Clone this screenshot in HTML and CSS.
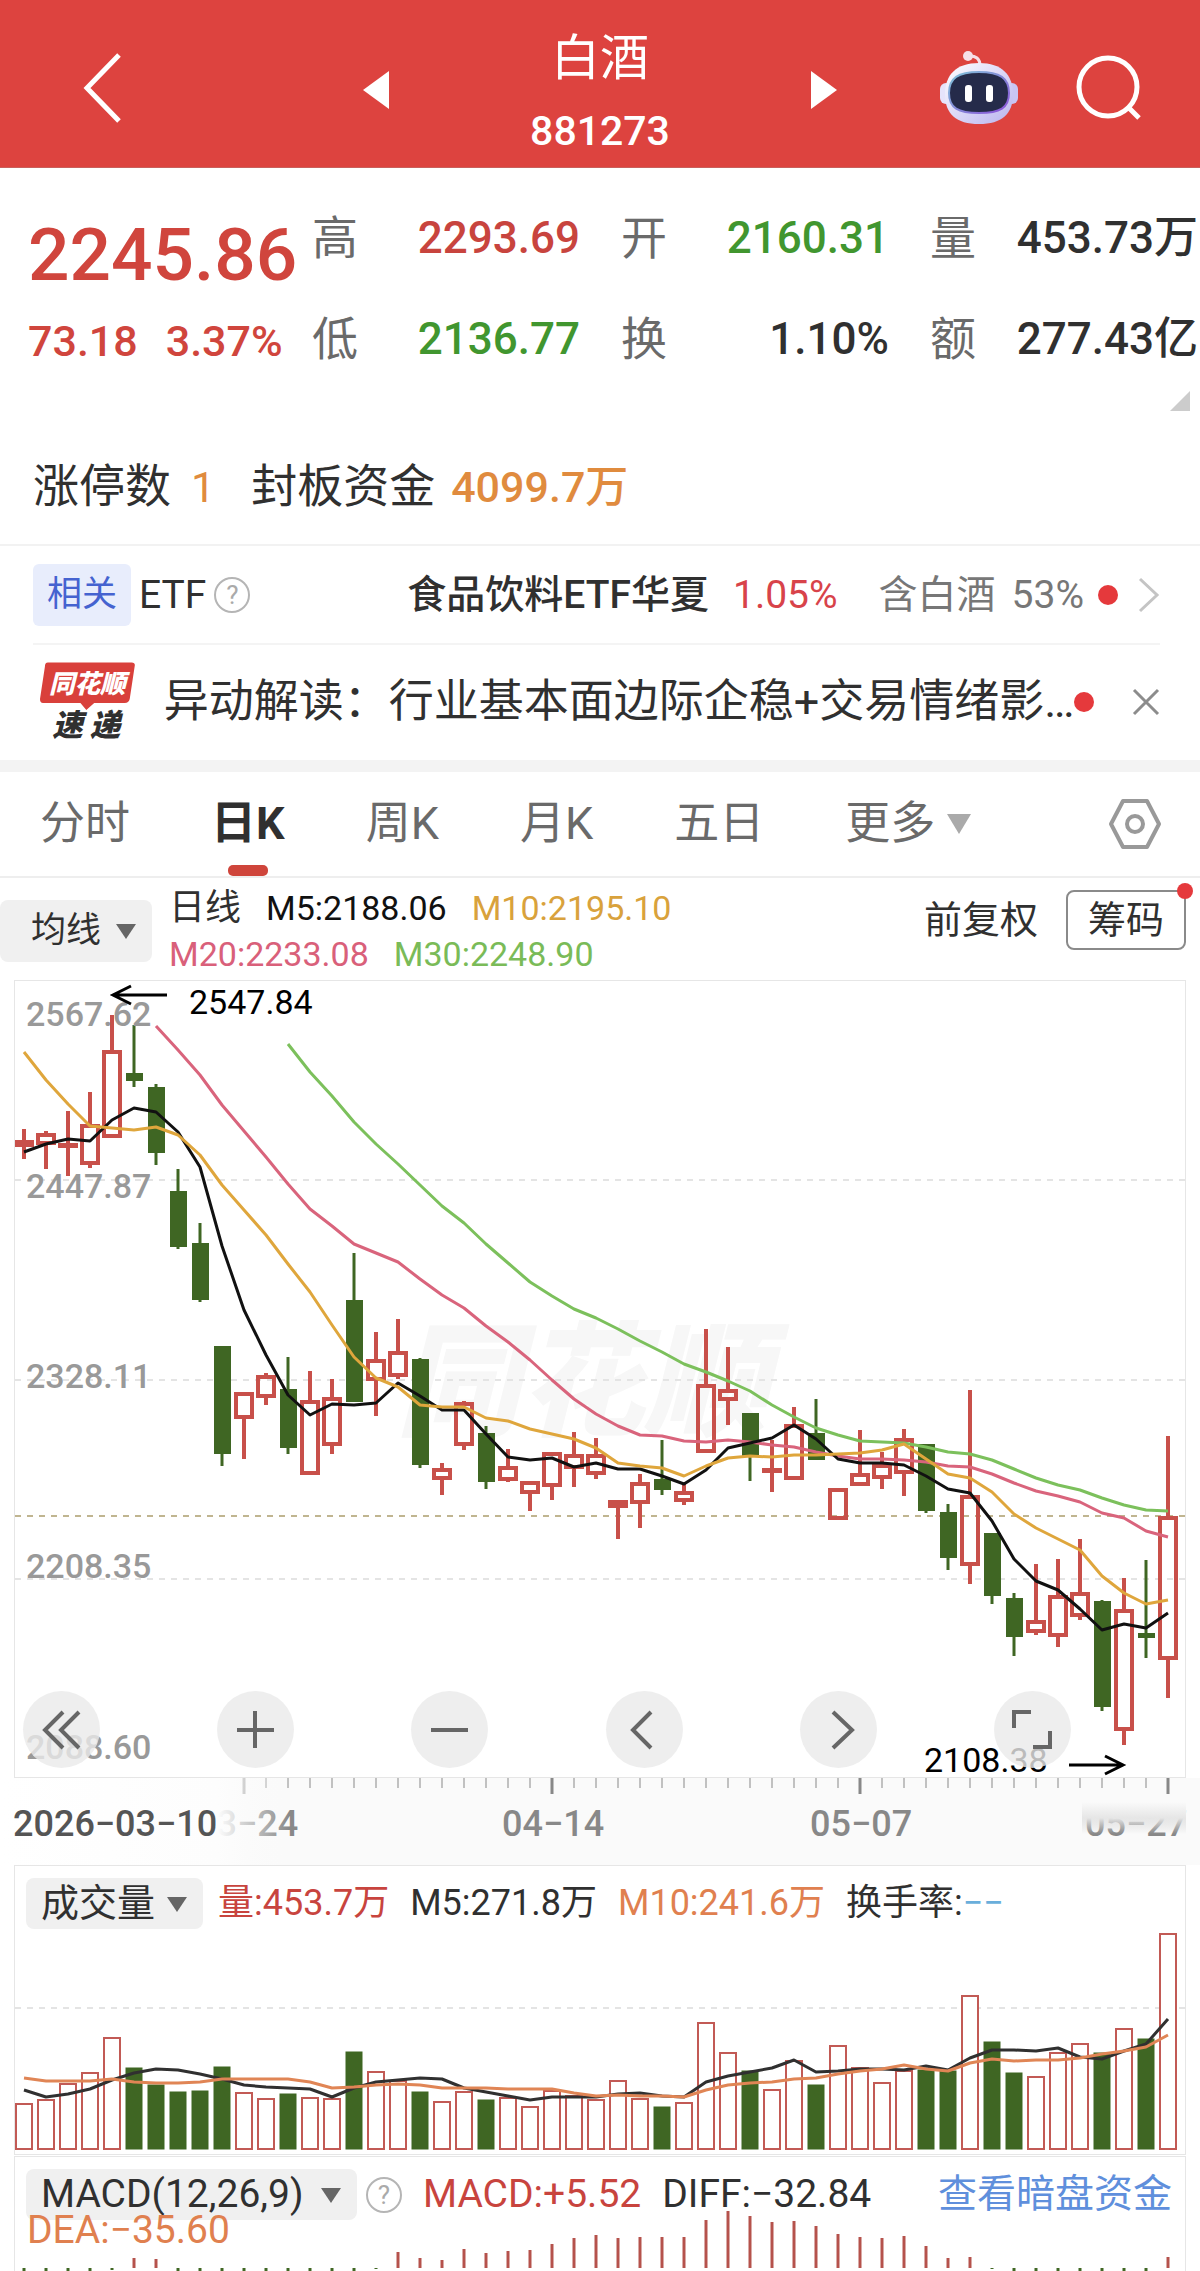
FILE: index.html
```html
<!DOCTYPE html>
<html lang="zh-CN">
<head>
	<meta charset="utf-8">
	<meta name="viewport" content="width=device-width, initial-scale=1">
	<title>白酒 881273</title>
	<link rel="stylesheet" href="styles.css">
</head>

<body>
	<header class="header">
		<button class="back" aria-label="返回">
			<svg width="38" height="70" viewBox="0 0 38 70"><path d="M36 2L4 35L36 68" fill="none" stroke="#fff" stroke-width="5"/></svg>
		</button>
		<div class="switcher">
			<button aria-label="上一个"><svg width="26" height="38" viewBox="0 0 26 38"><path d="M26 0V38L0 19Z" fill="#fff"/></svg></button>
			<div class="name">
				<h1>白酒</h1>
				<p>881273</p>
			</div>
			<button aria-label="下一个"><svg width="26" height="38" viewBox="0 0 26 38"><path d="M0 0V38L26 19Z" fill="#fff"/></svg></button>
		</div>
		<div class="actions">
			<button aria-label="助手">
				<svg width="78" height="74" viewBox="0 0 78 74">
					<defs>
						<linearGradient id="head" x1="0" y1="0" x2="1" y2="1"><stop offset="0" stop-color="#fff"/><stop offset=".5" stop-color="#dcd8f8"/><stop offset="1" stop-color="#b9b4ee"/></linearGradient>
						<linearGradient id="rim" x1="0" y1="0" x2="1" y2="1"><stop offset="0" stop-color="#7fc4d8"/><stop offset="1" stop-color="#8a4fd8"/></linearGradient>
					</defs>
					<path d="M28 5Q40 4 40 15" fill="none" stroke="#f6dfe8" stroke-width="3"/>
					<circle cx="28" cy="5" r="5" fill="#f6dfe8"/>
					<rect x="0" y="32" width="12" height="21" rx="6" fill="#e6e3fb"/>
					<rect x="66" y="32" width="12" height="21" rx="6" fill="#c9c5f4"/>
					<path d="M39 12C62 12 73 24 73 43C73 63 62 73 39 73C16 73 5 63 5 43C5 24 16 12 39 12Z" fill="url(#head)"/>
					<path d="M39 21C60 21 69 27 69 42C69 57 60 62 39 62C18 62 9 57 9 42C9 27 18 21 39 21Z" fill="#252b4a" stroke="url(#rim)" stroke-width="2"/>
					<rect x="25" y="34" width="7" height="17" rx="3" fill="#fff"/>
					<rect x="46" y="34" width="7" height="17" rx="3" fill="#fff"/>
				</svg>
			</button>
			<button aria-label="搜索">
				<svg width="66" height="66" viewBox="0 0 66 66" fill="none" stroke="#fff" stroke-width="5"><circle cx="32" cy="32" r="29"/><path d="M52 52L63 63"/></svg>
			</button>
		</div>
	</header>

	<section class="quote">
		<div class="price">
			<strong>2245.86</strong>
			<p><span>73.18</span><span>3.37%</span></p>
		</div>
		<dl class="stats">
			<div><dt>高</dt><dd class="up">2293.69</dd></div>
			<div><dt>开</dt><dd class="down">2160.31</dd></div>
			<div><dt>量</dt><dd>453.73万</dd></div>
			<div><dt>低</dt><dd class="down">2136.77</dd></div>
			<div><dt>换</dt><dd>1.10%</dd></div>
			<div><dt>额</dt><dd>277.43亿</dd></div>
		</dl>
	</section>
	<div class="corner"><svg width="20" height="20" viewBox="0 0 20 20"><path d="M20 0V20H0Z" fill="#ccc"/></svg></div>

	<p class="limit">涨停数<b class="count">1</b>封板资金<b>4099.7万</b></p>

	<section class="etf">
		<a class="tag" href="#">相关</a>
		<span class="etf-label">ETF</span>
		<button class="help" aria-label="说明">?</button>
		<a class="fund" href="#">食品饮料ETF华夏</a>
		<span class="rise">1.05%</span>
		<span class="ratio">含白酒</span>
		<span class="ratio">53%</span>
		<i class="dot"></i>
		<svg class="more" width="22" height="36" viewBox="0 0 22 36"><path d="M2 2L19 18L2 34" fill="none" stroke="#c4c4c4" stroke-width="3"/></svg>
	</section>

	<section class="news">
		<svg width="96" height="80" viewBox="0 0 96 80">
			<path d="M8 0H93Q97 0 96 4L91 37Q90 41 86 41H55L47 48L41 41H3Q0 41 0 37L5 4Q5 0 8 0Z" fill="#d9403b"/>
			<text x="48" y="31" class="logo-top">同花顺</text>
			<text x="47" y="74" class="logo-bottom">速 递</text>
		</svg>
		<a href="#">异动解读：行业基本面边际企稳+交易情绪影…</a>
		<i class="dot"></i>
		<button class="close" aria-label="关闭"><svg width="28" height="28" viewBox="0 0 28 28"><path d="M2 2L26 26M26 2L2 26" stroke="#8c8c8c" stroke-width="3"/></svg></button>
	</section>

	<nav class="tabs">
		<button>分时</button>
		<button class="active">日K</button>
		<button>周K</button>
		<button>月K</button>
		<button>五日</button>
		<button>更多<svg width="24" height="20" viewBox="0 0 24 20"><path d="M0 0H24L12 20Z" fill="#aaa"/></svg></button>
		<button class="settings" aria-label="设置">
			<svg width="54" height="52" viewBox="0 0 54 52" fill="none" stroke="#999" stroke-width="4" stroke-linejoin="round"><path d="M15 3H39L51 26L39 49H15L3 26Z"/><circle cx="27" cy="26" r="8"/></svg>
		</button>
	</nav>

	<section class="average">
		<label class="picker"><select aria-label="主图指标"><option>均线</option></select></label>
		<div class="legend">
			<div><span class="kline">日线</span><span class="m5">M5:2188.06</span><span class="m10">M10:2195.10</span></div>
			<div><span class="m20">M20:2233.08</span><span class="m30">M30:2248.90</span></div>
		</div>
		<div class="modes">
			<button>前复权</button>
			<button class="chips">筹码<i></i></button>
		</div>
	</section>

	<section class="panel kchart">
		<svg id="kline" viewBox="15 0 1170 796"></svg>
		<div class="toolbar">
			<button aria-label="最早"><svg viewBox="0 0 77 77"><path d="M40 21L22 39L40 57M56 21L38 39L56 57"/></svg></button>
			<button aria-label="放大"><svg viewBox="0 0 77 77"><path d="M20 39H57M38 20V57"/></svg></button>
			<button aria-label="缩小"><svg viewBox="0 0 77 77"><path d="M20 39H57"/></svg></button>
			<button aria-label="向左"><svg viewBox="0 0 77 77"><path d="M45 21L27 39L45 57"/></svg></button>
			<button aria-label="向右"><svg viewBox="0 0 77 77"><path d="M33 21L52 39L33 57"/></svg></button>
			<button aria-label="全屏"><svg viewBox="0 0 77 77"><path d="M37 21H20V37M56 40V56H39"/></svg></button>
		</div>
	</section>

	<svg id="axis" class="axis" viewBox="0 0 1200 87"></svg>

	<section class="panel">
		<div class="info">
			<label class="picker"><select aria-label="副图指标"><option>成交量</option></select></label>
			<span class="up">量:453.7万</span>
			<span>M5:271.8万</span>
			<span class="orange">M10:241.6万</span>
			<span>换手率:<em>−−</em></span>
		</div>
		<svg id="volume" viewBox="15 0 1170 225"></svg>
	</section>

	<section class="panel macd">
		<svg id="macd" viewBox="15 0 1170 116"></svg>
		<div class="info">
			<label class="picker"><select aria-label="副图指标二"><option>MACD(12,26,9)</option></select></label>
			<button class="help" aria-label="说明">?</button>
			<span class="up">MACD:+5.52</span>
			<span>DIFF:−32.84</span>
			<a href="#">查看暗盘资金</a>
		</div>
		<p class="dea">DEA:−35.60</p>
	</section>

	<script src="chart.js"></script>
</body>
</html>
```
FILE: styles.css
```css
 /* Page */
* {
	margin: 0;
	padding: 0;
	box-sizing: border-box;
}

body {
	background: #fff;
	color: #303030;
	font-family: Roboto, "Noto Sans CJK SC", sans-serif;
	font-size: 38px;
	overflow-x: hidden;
}

button, select {
	border: none;
	background: none;
	color: inherit;
	font: inherit;
	appearance: none;
	cursor: pointer;
}

a {
	color: inherit;
	text-decoration: none;
}

svg {
	display: block;
}

.up { color: #c8443e; }
.down { color: #41962f; }
.orange { color: #e0804f; }

 /* Header */
.header {
	display: grid;
	grid-template-columns: 1fr 474px 1fr;
	align-items: center;
	background: #dd433f;
	color: #fff;
	border-bottom: 1px solid #c9605c;
}

.back {
	justify-self: start;
	margin: 8px 0 0 83px;
}

.switcher {
	display: flex;
	align-items: center;
	justify-content: space-between;
	padding-top: 12px;
}

.name {
	text-align: center;
	margin-top: 10px;
}

.name h1 {
	font-size: 49px;
	font-weight: 400;
	line-height: 74px;
}

.name p {
	font-size: 41px;
	font-weight: 500;
	line-height: 71px;
}

.actions {
	display: flex;
	align-items: center;
	justify-content: flex-end;
	gap: 58px;
	margin-top: 8px;
	padding-right: 58px;
}

 /* Quote */
.quote {
	display: flex;
	padding: 40px 2px 0 28px;
}

.price {
	width: 284px;
	color: #d0453d;
}

.price strong {
	display: block;
	font-size: 73px;
	font-weight: 500;
	line-height: 94px;
}

.price p {
	display: flex;
	gap: 28px;
	margin-top: 9px;
	font-size: 43px;
	line-height: 60px;
	font-weight: 500;
}

.stats {
	flex: 1;
	display: grid;
	grid-template-columns: repeat(3, 1fr);
	gap: 39px 41px;
}

.stats div {
	display: flex;
	justify-content: space-between;
	line-height: 60px;
}

.stats dt {
	font-size: 46px;
	color: #6a6a6a;
}

.stats dd {
	font-size: 44px;
	font-weight: 500;
}

.corner {
	display: flex;
	justify-content: flex-end;
	margin-top: 20px;
	padding-right: 10px;
}

.limit {
	padding: 45px 33px 27px;
	font-size: 46px;
	line-height: 60px;
	border-bottom: 2px solid #f2f2f2;
}

.limit b {
	margin-left: 16px;
	color: #e08b3e;
	font-size: 43px;
	font-weight: 500;
}

.limit .count {
	margin: 0 36px 0 20px;
	font-weight: 400;
}

 /* Related fund and news rows */
.etf, .news {
	display: flex;
	align-items: center;
	margin: 0 40px 0 33px;
}

.etf {
	padding: 18px 0 17px;
	font-size: 39px;
	line-height: 62px;
	border-bottom: 2px solid #f4f4f4;
}

.tag {
	padding: 0 14px;
	border-radius: 6px;
	background: #e8edfc;
	color: #4563d0;
	font-size: 35px;
}

.etf-label {
	margin: 0 8px;
}

.help {
	width: 36px;
	height: 36px;
	border: 2px solid #b5b5b5;
	border-radius: 50%;
	color: #aaa;
	font-size: 26px;
	line-height: 32px;
}

.fund {
	margin-left: auto;
	font-weight: 500;
}

.rise {
	margin: 0 25px 0 24px;
	color: #d8434a;
}

.ratio {
	margin-left: 16px;
	color: #777;
}

.dot {
	width: 20px;
	height: 20px;
	margin-left: 14px;
	border-radius: 50%;
	background: #e5393c;
}

.more {
	margin-left: 20px;
}

.news {
	margin-left: 40px;
	padding: 17px 0 18px;
	font-size: 45px;
	line-height: 60px;
}

.news a {
	flex: 1;
	margin-left: 29px;
	white-space: nowrap;
}

.news .dot {
	margin-left: 0;
}

.close {
	margin-left: 38px;
}

.logo-top, .logo-bottom {
	font-family: "Noto Sans CJK SC", sans-serif;
	font-style: italic;
	font-weight: 900;
	text-anchor: middle;
}

.logo-top {
	font-size: 26px;
	fill: #fff;
}

.logo-bottom {
	font-size: 31px;
	fill: #303030;
}

 /* Period tabs */
.tabs {
	display: flex;
	gap: 81px;
	padding: 0 38px 0 40px;
	border-top: 12px solid #f3f3f3;
	border-bottom: 2px solid #eee;
	color: #6a6a6a;
	font-size: 45px;
}

.tabs button {
	display: flex;
	align-items: center;
	gap: 12px;
	position: relative;
	line-height: 104px;
}

.tabs .active {
	color: #303030;
	font-weight: 700;
}

.tabs .active::after {
	content: "";
	position: absolute;
	bottom: 0;
	left: 50%;
	width: 40px;
	height: 11px;
	margin-left: -20px;
	border-radius: 5px;
	background: #cf453b;
}

.tabs .settings {
	margin-left: auto;
}

 /* Indicator pickers and averages */
.picker {
	position: relative;
	border-radius: 8px;
	background: #f0f0f0;
}

.picker select {
	display: block;
	padding: 0 47px 0 15px;
	font-size: 38px;
	line-height: 51px;
}

.picker::after {
	content: "";
	position: absolute;
	top: 50%;
	right: 16px;
	margin-top: -7px;
	border: 10px solid transparent;
	border-top: 15px solid #666;
	border-bottom: none;
	pointer-events: none;
}

.average {
	display: flex;
	align-items: center;
	padding: 7px 14px 3px 0;
}

.average .picker select {
	padding: 0 50px 0 31px;
	font-size: 35px;
	line-height: 62px;
}

.legend {
	margin-left: 17px;
	font-size: 34px;
	line-height: 46px;
}

.legend div {
	display: flex;
	gap: 25px;
}

.kline { font-size: 36px; }
.m5 { color: #111; }
.m10 { color: #d9a23c; }
.m20 { color: #d9607a; }
.m30 { color: #7abb58; }

.modes {
	display: flex;
	align-items: center;
	gap: 28px;
	margin: 0 0 22px auto;
	line-height: 56px;
}

.modes button {
	line-height: 56px;
}

.modes .chips {
	position: relative;
	padding: 0 20px;
	border: 2px solid #8a8a8a;
	border-radius: 8px;
}

.chips i {
	position: absolute;
	top: -9px;
	right: -9px;
	width: 16px;
	height: 16px;
	border-radius: 50%;
	background: #e5393c;
}

 /* Chart panels */
.panel {
	position: relative;
	margin: 0 14px;
	border: 1px solid #e6e6e6;
}

.panel > svg, .axis {
	width: 100%;
	height: auto;
}

.toolbar {
	position: absolute;
	left: 0;
	right: 0;
	bottom: 9px;
	display: flex;
	justify-content: space-between;
	padding: 0 114px 0 8px;
}

.toolbar button {
	width: 77px;
	height: 77px;
	border-radius: 50%;
	background: rgba(234, 234, 234, .8);
}

.toolbar svg {
	fill: none;
	stroke: #666;
	stroke-width: 4;
}

.info {
	display: flex;
	align-items: center;
	gap: 21px;
	padding: 12px 13px 0 11px;
	font-size: 36px;
	line-height: 51px;
	white-space: nowrap;
}

.info .up {
	margin-left: -6px;
}

.info em {
	color: #6aaedb;
	font-style: normal;
}

.panel + .panel {
	margin-top: 1px;
}

.macd {
	border-bottom: none;
}

.macd > svg {
	position: absolute;
	top: 0;
}

.macd .info, .dea {
	position: relative;
	font-size: 39px;
}

.macd .picker select {
	padding-right: 53px;
	font-size: 39px;
}

.macd .help {
	margin-left: -12px;
}

.macd .up {
	margin-left: 0;
}

.macd a {
	margin-left: auto;
	color: #5f8fdc;
}

.dea {
	margin: -12px 0 0 12px;
	color: #e0804f;
	line-height: 44px;
	padding-bottom: 20px;
}

 /* Chart drawing */
.grid { stroke: #e4e4e4; stroke-width: 2; stroke-dasharray: 6 6; }
.last { stroke: #c0b590; stroke-width: 2; stroke-dasharray: 6 6; }
.rise-bar { fill: none; stroke: #c8504a; stroke-width: 4; }
.rise-vol { fill: #fff; stroke: #c25a55; stroke-width: 2; }
.fall-bar { fill: #3f6623; stroke: #3f6623; }
.fall-wick { stroke: #3f6623; stroke-width: 3; }
.rise-macd { stroke: #b5524c; stroke-width: 3; }
.avg { fill: none; stroke-width: 3; stroke-linejoin: round; }
.scale { font-size: 34px; font-weight: 500; fill: #999; }
.mark { font-size: 34px; fill: #000; }
.arrow { fill: none; stroke: #000; stroke-width: 3; }
.tick { stroke: #888; }
.date { font-size: 36px; font-weight: 500; fill: #888; }
.date-start { fill: #555; }
.watermark {
	font-family: "Noto Sans CJK SC", sans-serif;
	font-size: 124px;
	font-style: italic;
	font-weight: 900;
	fill: #f7f7f7;
}
```
FILE: chart.js
```javascript
// Every series has one value per trading day, STEP apart
var X0 = 24;
var STEP = 22;

// r/g, high, body top, body bottom, low
var candles = [
	['r',148,159,166,178],['r',150,152,164,188],['r',130,162,165,195],['r',111,143,184,187],['r',34,69,157,157],
	['g',44,92,100,106],['g',103,106,172,184],['g',188,210,266,268],['g',242,262,319,321],['g',365,365,473,485],
	['r',411,411,438,478],['r',392,394,417,424],['g',376,408,467,473],['r',390,419,494,494],['r',398,416,465,473],
	['g',272,319,421,421],['r',351,378,400,435],['r',338,370,396,398],['g',377,378,484,487],['r',482,487,499,514],
	['r',420,421,465,469],['g',445,452,501,508],['r',468,485,500,501],['r',500,500,513,530],['r',471,471,506,519],
	['r',451,473,488,506],['r',457,473,494,498],['r',519,519,527,558],['r',493,501,523,547],['g',459,498,509,514],
	['r',503,510,521,524],['r',348,403,472,472],['r',366,408,420,444],['g',432,432,475,500],['r',459,487,490,511],
	['r',426,443,499,499],['g',418,452,479,479],['r',507,507,539,539],['r',449,492,505,505],['r',471,483,498,508],
	['r',448,457,493,515],['g',463,463,530,532],['g',523,531,577,589],['r',409,514,585,603],['g',552,552,615,623],
	['g',612,617,656,675],['r',583,639,652,654],['r',578,614,656,666],['r',558,611,636,639],['g',619,620,726,730],
	['r',597,628,750,764],['g',579,652,657,677],['r',455,535,679,717]
];

var ma5 = [171,163,158,160,139,127,131,151,186,265,329,374,414,434,423,424,422,402,415,429,429,453,476,479,477,486,482,488,488,495,503,489,467,462,457,444,458,478,482,482,484,495,508,512,540,578,600,609,628,649,643,647,632];
var ma10 = [71,99,123,145,147,149,146,154,174,204,229,254,283,311,344,376,397,406,424,426,426,437,440,448,453,458,467,482,485,487,495,485,477,475,476,474,474,473,472,469,463,478,493,497,511,533,547,558,569,595,612,623,619];
var ma20 = [45,69,94,124,150,176,203,228,245,263,272,281,298,314,327,345,361,379,399,418,433,445,454,455,460,461,459,461,464,466,471,475,478,478,479,481,485,486,493,502,510,515,521,532,537,550,556];
var ma30 = [63,91,115,141,163,183,204,225,242,263,282,301,315,328,337,348,360,371,383,391,400,410,424,436,447,454,460,461,462,466,471,473,479,488,497,504,509,517,524,529,530];

var volumes = [46,50,66,77,112,82,65,58,59,83,57,51,56,52,51,98,78,69,58,48,58,50,52,43,59,54,50,69,51,43,47,127,97,79,60,89,65,104,82,67,79,80,79,154,108,77,73,97,106,97,121,111,216];
var vol5 = [60,53,56,61,70,77,81,80,76,71,65,63,62,61,53,62,68,70,72,71,62,58,54,50,53,53,53,56,57,54,53,68,74,78,82,90,78,79,81,81,80,84,80,92,100,100,99,102,93,91,99,106,131];
var vol10 = [72,69,69,69,71,68,67,67,68,71,71,71,71,68,62,63,65,66,65,62,62,62,61,61,61,57,54,55,54,54,53,60,65,67,68,71,72,76,79,81,85,81,79,87,91,89,90,90,92,96,99,103,115];
var macd = [-6,-6,-6,-6,-2,10,9,-4,-6,-6,-6,-6,-6,-6,-6,-6,-1,16,10,8,19,15,17,18,24,30,33,30,31,31,31,48,57,52,46,47,42,34,31,30,32,22,10,11,-1,-6,-6,-6,-6,-6,-6,-6,11];

function x(i) {
	return X0 + i * STEP;
}

function line(cls, x1, y1, x2, y2) {
	return '<line class="' + cls + '" x1="' + x1 + '" y1="' + y1 + '" x2="' + x2 + '" y2="' + y2 + '"/>';
}

function text(cls, px, py, str) {
	return '<text class="' + cls + '" x="' + px + '" y="' + py + '">' + str + '</text>';
}

// without a base the values are y positions, with one they are heights above it
function curve(color, data, base) {
	var start = candles.length - data.length;
	var pts = data.map(function (v, i) {
		return x(start + i) + ',' + (base ? base - v : v);
	});
	return '<polyline class="avg" stroke="' + color + '" points="' + pts.join(' ') + '"/>';
}

function drawKline() {
	var s = text('watermark', 396, 445, '同花顺');
	[199, 399, 598].forEach(function (y) { s += line('grid', 15, y, 1185, y); });
	s += line('last', 15, 535, 1185, 535);
	candles.forEach(function (c, i) {
		var cx = x(i);
		if (c[0] == 'g') {
			s += line('fall-wick', cx, c[1], cx, c[4]);
			s += '<rect class="fall-bar" stroke-width="0" x="' + (cx - 8) + '" y="' + c[2] + '" width="17" height="' + (c[3] - c[2]) + '"/>';
		} else {
			s += line('rise-bar', cx, c[1], cx, c[2]) + line('rise-bar', cx, c[3], cx, c[4]);
			s += '<rect class="rise-bar" x="' + (cx - 8) + '" y="' + (c[2] + 2) + '" width="16" height="' + Math.max(c[3] - c[2] - 4, 1) + '"/>';
		}
	});
	s += curve('#7cc05c', ma30) + curve('#d9647c', ma20) + curve('#111', ma5) + curve('#dfa63c', ma10);
	s += text('scale', 26, 45, '2567.62') + text('scale', 26, 217, '2447.87') + text('scale', 26, 407, '2328.11');
	s += text('scale', 26, 597, '2208.35') + text('scale', 26, 778, '2088.60');
	s += text('mark', 189, 33, '2547.84') + text('mark', 924, 791, '2108.38');
	s += '<path class="arrow" d="M167 14H113M131 5L113 14L131 23"/>';
	s += '<path class="arrow" d="M1069 784H1123M1105 775L1123 784L1105 793"/>';
	document.getElementById('kline').innerHTML = s;
}

function drawAxis() {
	var s = '<defs><linearGradient id="fade"><stop offset="0" stop-color="#fff"/><stop offset=".75" stop-color="#fdfdfd"/><stop offset="1" stop-color="#fafafa" stop-opacity="0"/></linearGradient>';
	s += '<linearGradient id="smudge" x2="0" y2="1"><stop offset="0" stop-color="#fafafa"/><stop offset=".5" stop-color="#e6e6e6"/><stop offset="1" stop-color="#d8d8d8" stop-opacity="0"/></linearGradient></defs>';
	s += '<rect width="1200" height="87" fill="#fafafa"/>';
	for (var i = 10; i < candles.length; i++) {
		var major = (i - 10) % 14 == 0;
		s += '<line class="tick" stroke-width="' + (major ? 3 : 1) + '" x1="' + x(i) + '" y1="0" x2="' + x(i) + '" y2="' + (major ? 16 : 10) + '"/>';
	}
	s += text('date', 196, 58, '03−24') + text('date', 502, 58, '04−14') + text('date', 810, 58, '05−07') + text('date', 1085, 58, '05−27');
	s += '<rect width="290" height="87" fill="url(#fade)"/>';
	s += '<rect x="1082" y="24" width="104" height="32" fill="url(#smudge)"/>';
	s += text('date date-start', 13, 58, '2026−03−10');
	document.getElementById('axis').innerHTML = s;
}

function drawVolume() {
	var s = line('grid', 15, 79, 1185, 79);
	volumes.forEach(function (v, i) {
		var up = candles[i][0] == 'r';
		s += '<rect class="' + (up ? 'rise-vol' : 'fall-bar') + '" x="' + (x(i) - 8) + '" y="' + (221 - v) + '" width="16" height="' + (v - 1) + '"/>';
	});
	s += curve('#303030', vol5, 221) + curve('#e08555', vol10, 221);
	document.getElementById('volume').innerHTML = s;
}

function drawMacd() {
	var s = '';
	macd.forEach(function (v, i) {
		s += line(v > 0 ? 'rise-macd' : 'fall-wick', x(i), 111, x(i), 111 - v);
	});
	document.getElementById('macd').innerHTML = s;
}

drawKline();
drawAxis();
drawVolume();
drawMacd();
```
